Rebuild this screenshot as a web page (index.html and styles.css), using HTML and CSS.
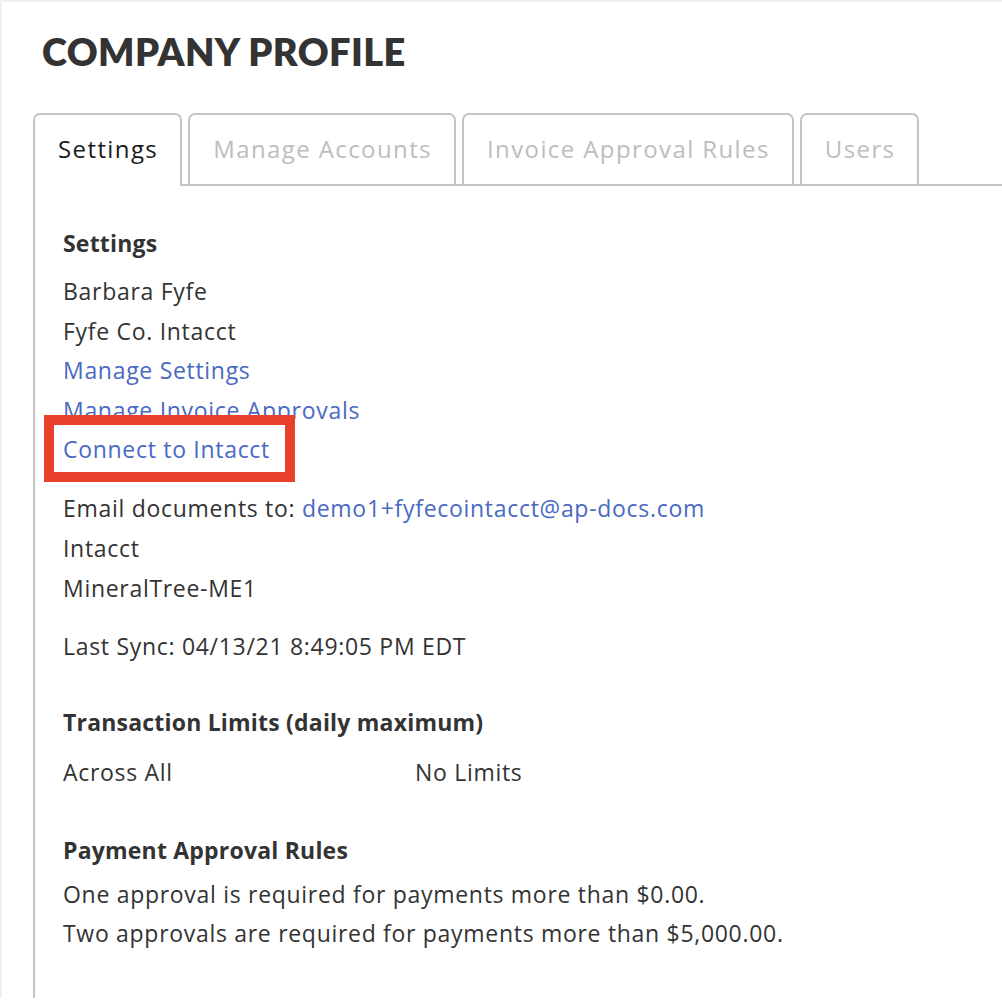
FILE: index.html
```html
<!DOCTYPE html>
<html>
<head>
<meta charset="utf-8">
<link rel="stylesheet" href="styles.css">
</head>
<body>
<div class="page">
  <h1 class="title">COMPANY PROFILE</h1>
  <div class="tabs">
    <div class="tab active">Settings</div>
    <div class="tab">Manage Accounts</div>
    <div class="tab">Invoice Approval Rules</div>
    <div class="tab">Users</div>
  </div>
  <div class="panel">
    <h3 class="section-title first">Settings</h3>
    <div class="group">
      <div class="line">Barbara Fyfe</div>
      <div class="line">Fyfe Co. Intacct</div>
      <div class="line"><a class="link" href="#">Manage Settings</a></div>
      <div class="line"><a class="link" href="#">Manage Invoice Approvals</a></div>
      <div class="line"><span class="highlight-wrap"><a class="link" href="#">Connect to Intacct</a><span class="highlight"></span></span></div>
    </div>
    <div class="group gap">
      <div class="line line40">Email documents to: <a class="link" href="#">demo1+fyfecointacct@ap-docs.com</a></div>
      <div class="line line40">Intacct</div>
      <div class="line line40">MineralTree-ME1</div>
    </div>
    <div class="group gap">
      <div class="line line40">Last Sync: 04/13/21 8:49:05 PM EDT</div>
    </div>
    <h3 class="section-title limits">Transaction Limits (daily maximum)</h3>
    <div class="limits-row">
      <span>Across All</span>
      <span>No Limits</span>
    </div>
    <h3 class="section-title rules">Payment Approval Rules</h3>
    <div class="group">
      <div class="line line39">One approval is required for payments more than $0.00.</div>
      <div class="line line39">Two approvals are required for payments more than $5,000.00.</div>
    </div>
  </div>
</div>
</body>
</html>
```

FILE: styles.css
```css
html, body {
  margin: 0;
  padding: 0;
  background: #ffffff;
}
body {
  font-family: "Open Sans", "Liberation Sans", sans-serif;
  color: #333333;
  height: 1000px;
  overflow: hidden;
}
.page {
  border-top: 2px solid #eff0f0;
  border-left: 2px solid #eff0f0;
  height: 998px;
  box-sizing: border-box;
  display: flex;
  flex-direction: column;
}
.title {
  margin: 27px 0 0 40px;
  font-family: "Lato", "Liberation Sans", sans-serif;
  font-size: 38px;
  line-height: 44px;
  font-weight: 800;
  color: #333333;
  letter-spacing: 0.4px;
}
.tabs {
  display: flex;
  gap: 6px;
  margin: 40px 0 0 31px;
  border-bottom: 2px solid #c3c3c3;
  height: 71px;
}
.tab {
  height: 71px;
  box-sizing: border-box;
  border: 2px solid #c3c3c3;
  border-bottom: none;
  border-radius: 7px 7px 0 0;
  padding: 0 22px 3px 23px;
  display: flex;
  align-items: center;
  font-size: 24px;
  letter-spacing: 1.4px;
  color: #bdbdbd;
  background: #fff;
}
.tab.active {
  color: #1a1a1a;
  height: 73px;
  margin-bottom: -2px;
  padding-bottom: 5px;
  position: relative;
  z-index: 1;
}
.panel {
  flex: 1;
  margin-left: 31px;
  border-left: 2px solid #c3c3c3;
  padding: 37px 0 0 28px;
  font-size: 23px;
  letter-spacing: 0.7px;
}
.section-title {
  margin: 0;
  font-size: 23px;
  line-height: 40px;
  font-weight: 700;
  letter-spacing: 0.2px;
  color: #333333;
}
.section-title.first { margin-bottom: 9px; }
.section-title.limits { margin-top: 36px; margin-bottom: 10px; }
.section-title.rules { margin-top: 38px; margin-bottom: 5px; }
.line {
  line-height: 39.5px;
}
.line40 { line-height: 40px; }
.line39 { line-height: 39px; }
.gap { margin-top: 18px; }
.link {
  color: #4a69c2;
  text-decoration: none;
}
.highlight-wrap {
  position: relative;
  display: inline-block;
}
.highlight {
  position: absolute;
  left: -19px;
  top: -15px;
  width: 251px;
  height: 67px;
  box-sizing: border-box;
  border: 10px solid #e8402a;
}
.limits-row {
  display: grid;
  grid-template-columns: 352px auto;
  line-height: 40px;
}
```
